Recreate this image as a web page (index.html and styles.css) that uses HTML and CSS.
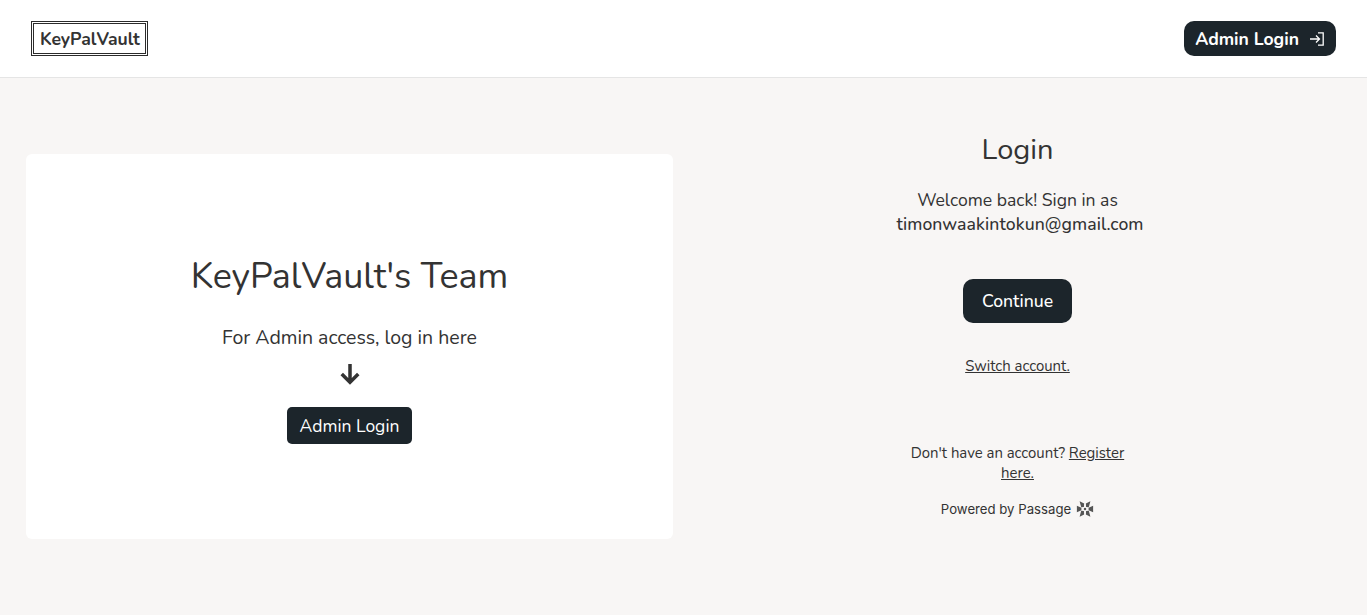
FILE: index.html
```html
<!DOCTYPE html>
<html>
<head>
  <meta charset="UTF-8">
  <title>KeyPalVault</title>
  <link rel="stylesheet" href="styles.css">
</head>
<body>
  <header class="navbar">
    <a class="logo" href="#">KeyPalVault</a>
    <a class="nav-login" href="#">
      Admin Login
      <svg class="nav-icon" viewBox="0 0 16 16" width="16" height="16" fill="none" stroke="currentColor" stroke-width="1.300">
        <path d="M9 1.800h5.200v12.400H9"/>
        <path d="M1 8h9.500M7 4.500l3.500 3.500L7 11.500"/>
      </svg>
    </a>
  </header>
  <main class="page">
    <section class="team-card">
      <h1>KeyPalVault's Team</h1>
      <p class="team-text">For Admin access, log in here</p>
      <svg class="arrow" viewBox="0 0 20 20" width="22" height="22" fill="none" stroke="currentColor" stroke-width="3.200">
        <path d="M10 1v16M2.500 10l7.500 7.500 7.500-7.500"/>
      </svg>
      <a class="card-login" href="#">Admin Login</a>
    </section>
    <section class="auth">
      <h2>Login</h2>
      <p class="welcome">Welcome back! Sign in as<br><span class="email">timonwaakintokun@gmail.com</span></p>
      <button class="continue">Continue</button>
      <a class="switch" href="#">Switch account.</a>
      <p class="register">Don't have an account? <a href="#">Register here.</a></p>
      <div class="powered">
        Powered by Passage
        <svg viewBox="0 0 20 20" width="18" height="18" fill="#555">
          <circle cx="10" cy="10" r="1.400"/>
          <path d="M4 1.500l5 2.500-.2 3.800-3 .2z"/>
          <path d="M16 1.500l-5 2.500.2 3.800 3 .2z"/>
          <path d="M4 18.500l5-2.500-.2-3.800-3-.2z"/>
          <path d="M16 18.500l-5-2.500.2-3.800 3-.2z"/>
          <path d="M1 6.500l5 2v3l-5 2z"/>
          <path d="M19 6.500l-5 2v3l5 2z"/>
        </svg>
      </div>
    </section>
  </main>
</body>
</html>
```
FILE: styles.css
```css
* {
  box-sizing: border-box;
}
body {
  margin: 0;
  font-family: "Nunito", "Noto Sans", sans-serif;
  background-color: #f8f6f5;
  color: #333;
}
a {
  color: inherit;
}
.navbar {
  height: 78px;
  padding: 0 31px;
  display: flex;
  justify-content: space-between;
  align-items: center;
  background-color: white;
  border-bottom: 1px solid #e5e5e5;
}
.logo {
  height: 35px;
  display: flex;
  align-items: center;
  padding: 0 5px 0 6px;
  border: 3px double #2b2b2b;
  font-size: 17.600px;
  font-weight: 700;
  text-decoration: none;
}
.nav-login {
  display: flex;
  align-items: center;
  gap: 10px;
  height: 35px;
  padding: 0 11px;
  background-color: #1c252b;
  color: white;
  border-radius: 10px;
  font-size: 17.600px;
  font-weight: 700;
  text-decoration: none;
}
.page {
  display: flex;
  padding: 76px 26px 0;
}
.team-card {
  width: 647px;
  height: 385px;
  padding-top: 3px;
  display: flex;
  flex-direction: column;
  align-items: center;
  justify-content: center;
  background-color: white;
  border-radius: 6px;
}
.team-card h1 {
  margin: 0 0 23px;
  font-size: 35.900px;
  font-weight: 400;
}
.team-text {
  margin: 0 0 12px;
  font-size: 19.500px;
}
.arrow {
  margin-bottom: 22px;
}
.card-login {
  height: 37px;
  padding: 6.500px 13px;
  background-color: #1c252b;
  color: white;
  border-radius: 5px;
  font-size: 17.500px;
  text-decoration: none;
}
.auth {
  flex: 1;
  display: flex;
  flex-direction: column;
  align-items: center;
  text-align: center;
  padding-left: 21px;
  margin-top: -24px;
}
.auth h2 {
  margin: 0 0 19px;
  font-size: 29px;
  font-weight: 400;
}
.welcome {
  margin: 0 0 43px;
  font-size: 17.600px;
  line-height: 24px;
}
.email {
  margin-left: 5px;
  font-weight: 500;
  letter-spacing: .08px;
}
.continue {
  height: 44px;
  padding: 0 18.500px;
  border: none;
  border-radius: 10px;
  background-color: #1c252b;
  color: white;
  font-family: inherit;
  font-size: 17.600px;
  font-weight: 500;
  margin-bottom: 33px;
}
.switch {
  font-size: 14.900px;
  margin-bottom: 67px;
}
.register {
  width: 240px;
  margin: 0 0 17px;
  font-size: 14.900px;
  line-height: 20px;
}
.powered {
  display: flex;
  align-items: center;
  gap: 5px;
  font-family: "Inter", sans-serif;
  font-size: 13.200px;
}
```
